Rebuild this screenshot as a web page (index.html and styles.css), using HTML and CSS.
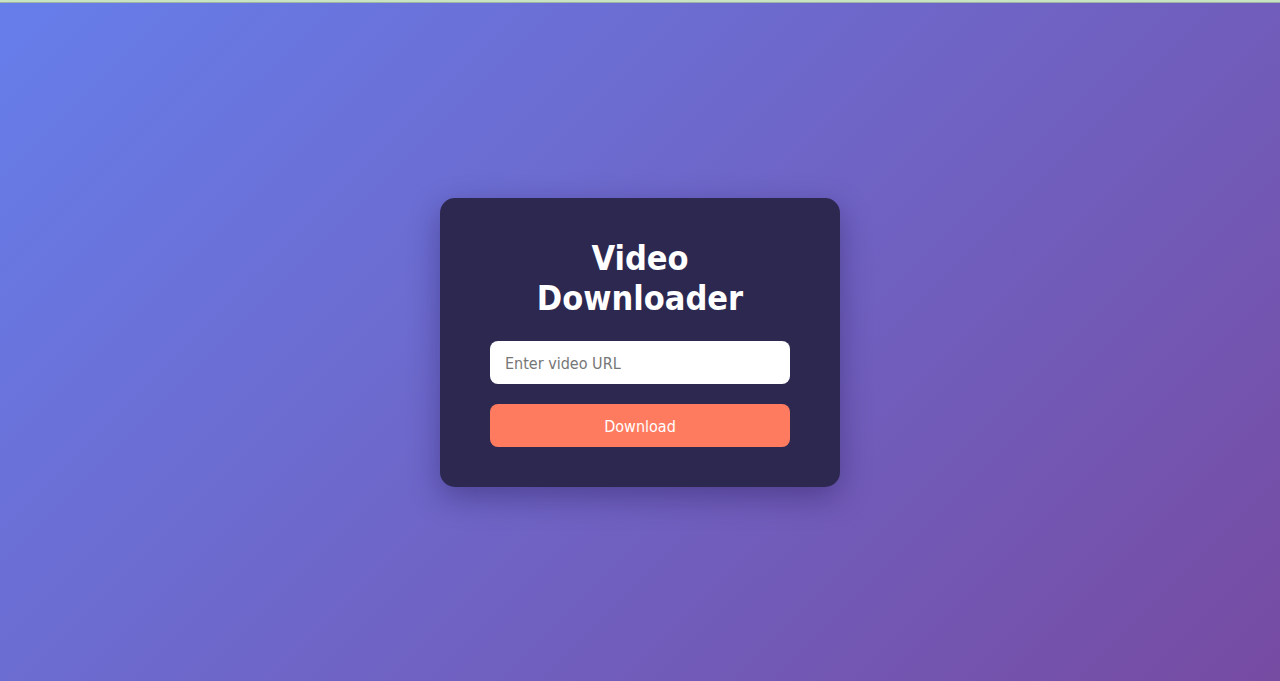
FILE: index.html
```html
<!DOCTYPE html>
<html lang="en">
<head>
<meta charset="utf-8">
<title>Video Downloader</title>
<link rel="stylesheet" href="styles.css">
</head>
<body>
<div class="topline"></div>
<main class="stage">
  <section class="card">
    <h1 class="title">Video Downloader</h1>
    <input class="url" type="text" placeholder="Enter video URL">
    <button class="btn" type="button">Download</button>
  </section>
</main>
</body>
</html>
```

FILE: styles.css
```css
* { box-sizing: border-box; }
html, body { margin: 0; padding: 0; height: 100%; }
body {
  font-family: "DejaVu Sans Condensed", "DejaVu Sans", sans-serif;
  background: linear-gradient(135deg, #667eea 0%, #764ba2 100%);
  display: flex;
  flex-direction: column;
  overflow: hidden;
}
.topline {
  height: 3px;
  flex: 0 0 3px;
  background: #c7e3c2;
  border-bottom: 1px solid #9fb3a4;
}
.stage {
  flex: 1;
  display: flex;
  align-items: center;
  justify-content: center;
}
.card {
  width: 400px;
  padding: 40px 50px;
  background: #2d2850;
  border-radius: 15px;
  box-shadow: 0 10px 30px rgba(20, 10, 60, 0.35);
  display: flex;
  flex-direction: column;
  align-items: stretch;
  margin-top: 1px;
}
.title {
  margin: 0 0 23px;
  color: #ffffff;
  font-size: 34px;
  line-height: 40px;
  font-weight: bold;
  text-align: center;
  padding: 0 40px;
}
.url {
  height: 43px;
  border: none;
  border-radius: 8px;
  background: #ffffff;
  padding: 2px 15px 0;
  font-family: inherit;
  font-size: 16px;
  color: #333;
  outline: none;
}
.url::placeholder { color: #767676; }
.btn {
  margin-top: 20px;
  height: 43px;
  border: none;
  border-radius: 8px;
  background: #ff7b5f;
  color: #ffffff;
  font-family: inherit;
  font-size: 16px;
  padding: 2px 0 0;
  cursor: pointer;
}
```
